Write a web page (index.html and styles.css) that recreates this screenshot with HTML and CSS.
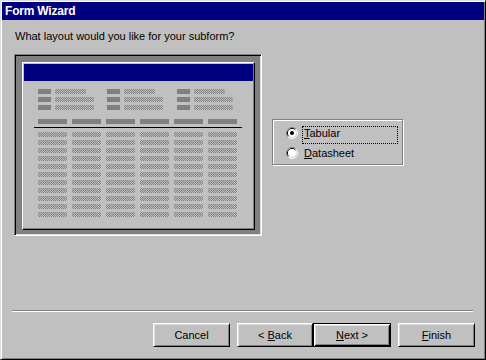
FILE: index.html
```html
<!DOCTYPE html>
<html lang="en">
<head>
    <meta charset="UTF-8">
    <title>Form Wizard</title>
    <link rel="stylesheet" href="styles.css">
</head>
<body>
    <div class="window">
        <div class="titlebar">Form Wizard</div>
        <div class="dialog">
            <p class="question">What layout would you like for your subform?</p>

            <div class="main">
                <!-- Vorschau des Unterformulars -->
                <div class="preview">
                    <div class="form">
                        <div class="form-title"></div>
                        <div class="fields">
                            <div class="field-col">
                                <div class="field"><span class="label"></span><span class="value short"></span></div>
                                <div class="field"><span class="label"></span><span class="value"></span></div>
                                <div class="field"><span class="label"></span><span class="value"></span></div>
                            </div>
                            <div class="field-col">
                                <div class="field"><span class="label"></span><span class="value short"></span></div>
                                <div class="field"><span class="label"></span><span class="value"></span></div>
                                <div class="field"><span class="label"></span><span class="value"></span></div>
                            </div>
                            <div class="field-col">
                                <div class="field"><span class="label"></span><span class="value short"></span></div>
                                <div class="field"><span class="label"></span><span class="value"></span></div>
                                <div class="field"><span class="label"></span><span class="value"></span></div>
                            </div>
                        </div>
                        <div class="headers"></div>
                        <div class="rule"></div>
                        <div class="data"></div>
                    </div>
                </div>

                <div class="options">
                    <div class="option">
                        <svg class="radio" width="12" height="12" viewBox="0 0 12 12">
                            <path d="M2.11 9.89 A5.5 5.5 0 0 1 9.89 2.11" fill="none" stroke="#808080"/>
                            <path d="M9.89 2.11 A5.5 5.5 0 0 1 2.11 9.89" fill="none" stroke="#fff"/>
                            <path d="M2.82 9.18 A4.5 4.5 0 0 1 9.18 2.82" fill="none" stroke="#000"/>
                            <path d="M9.18 2.82 A4.5 4.5 0 0 1 2.82 9.18" fill="none" stroke="#dfdfdf"/>
                            <circle cx="6" cy="6" r="4" fill="#fff"/>
                            <circle cx="6" cy="6" r="2" fill="#000"/>
                        </svg>
                        <span class="option-label focus"><u>T</u>abular</span>
                    </div>
                    <div class="option">
                        <svg class="radio" width="12" height="12" viewBox="0 0 12 12">
                            <path d="M2.11 9.89 A5.5 5.5 0 0 1 9.89 2.11" fill="none" stroke="#808080"/>
                            <path d="M9.89 2.11 A5.5 5.5 0 0 1 2.11 9.89" fill="none" stroke="#fff"/>
                            <path d="M2.82 9.18 A4.5 4.5 0 0 1 9.18 2.82" fill="none" stroke="#000"/>
                            <path d="M9.18 2.82 A4.5 4.5 0 0 1 2.82 9.18" fill="none" stroke="#dfdfdf"/>
                            <circle cx="6" cy="6" r="4" fill="#fff"/>
                        </svg>
                        <span class="option-label"><u>D</u>atasheet</span>
                    </div>
                </div>
            </div>

            <div class="separator"></div>

            <div class="buttons">
                <button class="btn cancel">Cancel</button>
                <button class="btn back">&lt; <u>B</u>ack</button>
                <button class="btn next default"><u>N</u>ext &gt;</button>
                <button class="btn finish"><u>F</u>inish</button>
            </div>
        </div>
    </div>
</body>
</html>
```

FILE: styles.css
```css
* {
    margin: 0;
    padding: 0;
    box-sizing: border-box;
}

body {
    background: #c0c0c0;
    font-family: "Liberation Sans", Arial, sans-serif;
    font-size: 11px;
    line-height: 13px;
    color: #000;
}

.window {
    width: 486px;
    height: 360px;
    background: #c0c0c0;
    border: 1px solid;
    border-color: #dfdfdf #000 #000 #dfdfdf;
    box-shadow: inset 1px 1px #fff, inset -1px -1px #808080;
    padding: 1px;
}

.titlebar {
    height: 18px;
    background: #000080;
    color: #fff;
    font-weight: bold;
    font-size: 12px;
    letter-spacing: -0.2px;
    line-height: 18px;
    padding-left: 3px;
}

.dialog {
    padding-left: 12px;
}

.question {
    margin-top: 10px;
    padding-left: 1px;
}

.main {
    display: flex;
    margin-top: 11px;
}

/* Vorschau */
.preview {
    width: 248px;
    height: 182px;
    background: #808080;
    border: 1px solid;
    border-color: #808080 #fff #fff #808080;
    box-shadow: inset 1px 1px #000, inset -1px -1px #dfdfdf;
    padding: 7px;
}

.form {
    width: 233px;
    height: 168px;
    background: #c0c0c0;
    border: 1px solid;
    border-color: #fff #000 #000 #fff;
    box-shadow: inset -1px -1px #808080;
    padding: 1px;
}

.form-title {
    height: 17px;
    background: #000080;
}

.fields {
    display: grid;
    grid-template-columns: 69px 70px auto;
    margin: 8px 0 0 14px;
}

.field-col {
    display: flex;
    flex-direction: column;
    gap: 3px;
}

.field {
    display: flex;
    gap: 4px;
    height: 5px;
}

.label {
    width: 13px;
    background: #808080;
}

.value {
    width: 39px;
    background: repeating-conic-gradient(#808080 0 25%, #c0c0c0 0 50%) 0 0 / 2px 2px;
}

.value.short {
    width: 31px;
}

.headers {
    width: 199px;
    height: 5px;
    margin: 9px 0 0 14px;
    background: repeating-linear-gradient(90deg, #808080 0 29px, transparent 29px 34px);
}

.rule {
    width: 208px;
    height: 1px;
    background: #000;
    margin: 3px 0 0 10px;
}

.data {
    width: 199px;
    height: 85px;
    margin: 4px 0 0 14px;
    background:
        repeating-linear-gradient(90deg, transparent 0 29px, #c0c0c0 29px 34px),
        repeating-linear-gradient(180deg, transparent 0 5px, #c0c0c0 5px 8px),
        repeating-conic-gradient(#808080 0 25%, #c0c0c0 0 50%) 0 0 / 2px 2px;
}

/* Optionen */
.options {
    width: 131px;
    height: 46px;
    margin: 65px 0 0 10px;
    border: 1px solid #808080;
    box-shadow: inset 1px 1px #fff, 1px 1px #fff;
    padding: 6px 0 0 13px;
    display: flex;
    flex-direction: column;
    gap: 2px;
}

.option {
    display: flex;
    align-items: flex-start;
    gap: 4px;
}

.radio {
    margin-top: 1px;
    flex-shrink: 0;
}

.option-label {
    width: 96px;
    height: 18px;
    border: 1px dotted transparent;
    padding: 0 1px 3px;
}

.option-label.focus {
    border-color: #000;
}

.separator {
    height: 2px;
    width: 461px;
    margin: 74px 0 0 -2px;
    border-top: 1px solid #808080;
    border-bottom: 1px solid #fff;
}

/* Schaltflächen */
.buttons {
    display: flex;
    justify-content: flex-end;
    padding-right: 9px;
    margin-top: 11px;
}

.btn {
    width: 77px;
    height: 24px;
    font-family: "Liberation Sans", Arial, sans-serif;
    font-size: 11px;
    color: #000;
    background: #c0c0c0;
    border: 1px solid;
    border-color: #fff #000 #000 #fff;
    box-shadow: inset 1px 1px #dfdfdf, inset -1px -1px #808080;
}

.back {
    width: 76px;
    margin-left: 7px;
}

.next {
    width: 78px;
}

.finish {
    margin-left: 7px;
}

.btn.default {
    border: 1px solid #000;
    box-shadow: inset 1px 1px #fff, inset -1px -1px #000, inset 2px 2px #dfdfdf, inset -2px -2px #808080;
}
```
